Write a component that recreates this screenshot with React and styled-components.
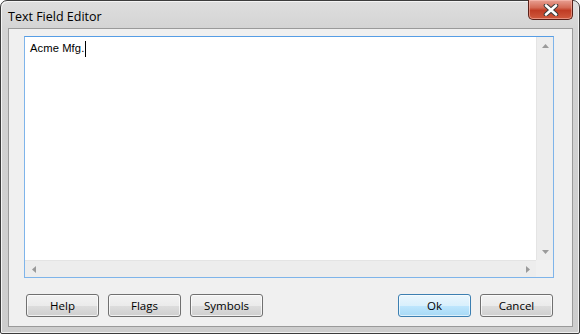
import React from 'react';
import styled, { createGlobalStyle } from 'styled-components';

const Global = createGlobalStyle`
  html, body { margin: 0; padding: 0; background: #ffffff; }
  body { width: 580px; height: 334px; overflow: hidden; }
`;

const Window = styled.div`
  box-sizing: border-box;
  width: 580px;
  height: 334px;
  border: 1px solid #3c3c3c;
  border-radius: 7px 7px 2px 2px;
  background: linear-gradient(to bottom, #dedede 0px, #d3d3d3 30px, #cdcdcd 100%);
  box-shadow: inset 1px 1px 0 #f4f4f4, inset -1px -1px 0 #f0f0f0;
  display: flex;
  flex-direction: column;
  font-family: "Liberation Sans", Arial, sans-serif;
`;

const TitleBar = styled.div`
  height: 28px;
  display: flex;
  align-items: flex-start;
  justify-content: space-between;
  padding: 0 6px 0 7px;
`;

const Title = styled.span`
  margin-top: 7px;
  font-family: "Open Sans", "Liberation Sans", sans-serif;
  font-size: 12.5px;
  color: #000;
`;

const CloseButton = styled.div`
  box-sizing: border-box;
  width: 45px;
  height: 20px;
  margin-top: -1px;
  border: 1px solid #5a2018;
  border-top: none;
  border-radius: 0 0 5px 5px;
  background: linear-gradient(to bottom, #e8a093 0%, #d46a55 40%, #c03c24 55%, #d05a3e 100%);
  box-shadow: inset 0 0 0 1px rgba(255, 200, 190, 0.5);
  display: flex;
  align-items: center;
  justify-content: center;
`;

const Client = styled.div`
  flex: 1;
  margin: 0 6px 6px 7px;
  border: 1px solid #9a9a9a;
  background: #f0f0f0;
  padding: 7px 18px 9px 15px;
  display: flex;
  flex-direction: column;
`;

const Editor = styled.div`
  box-sizing: border-box;
  height: 242px;
  width: 530px;
  border: 1px solid #7eb4ea;
  border-top-color: #569de5;
  background: #fff;
  display: grid;
  grid-template-columns: 1fr 17px;
  grid-template-rows: 1fr 17px;
`;

const TextArea = styled.div`
  padding: 4px 5px;
  font-family: "Liberation Sans", Arial, sans-serif;
  font-size: 11.2px;
  letter-spacing: 0.1px;
  color: #000;
  line-height: 15px;
`;

const Caret = styled.span`
  display: inline-block;
  width: 1px;
  height: 16px;
  background: #000;
  vertical-align: top;
  margin-left: 1px;
`;

const ScrollBar = styled.div`
  background: #ededed;
  display: flex;
  flex-direction: ${p => (p.$vertical ? 'column' : 'row')};
  justify-content: space-between;
  align-items: center;
  border-left: ${p => (p.$vertical ? '1px solid #e4e4e4' : 'none')};
  border-top: ${p => (p.$vertical ? 'none' : '1px solid #e4e4e4')};
`;

const Arrow = styled.div`
  width: 17px;
  height: 17px;
  display: flex;
  align-items: center;
  justify-content: center;
`;

const Corner = styled.div`
  background: #f0f0f0;
`;

const ButtonRow = styled.div`
  margin-top: 16px;
  padding: 0 1px 0 2px;
  display: flex;
  gap: 9px;
`;

const Spacer = styled.div`
  flex: 1;
`;

const Button = styled.button`
  box-sizing: border-box;
  width: 73px;
  height: 23px;
  margin: 0;
  border: 1px solid ${p => (p.$default ? '#3c7fb1' : '#707070')};
  border-radius: 3px;
  background: ${p =>
    p.$default
      ? 'linear-gradient(to bottom, #eaf6fd 0%, #d9f0fc 50%, #bee6fd 51%, #a7d9f5 100%)'
      : 'linear-gradient(to bottom, #f2f2f2 0%, #ebebeb 50%, #dddddd 51%, #cfcfcf 100%)'};
  box-shadow: inset 0 0 0 1px ${p => (p.$default ? 'rgba(255,255,255,0.6)' : 'rgba(255,255,255,0.7)')};
  font-family: "Open Sans", "Liberation Sans", sans-serif;
  font-size: 11.5px;
  color: #000;
  padding: 0;
`;

const UpArrow = () => (
  <svg width="7" height="4" viewBox="0 0 7 4"><path d="M0 4 L3.5 0 L7 4 Z" fill="#9a9a9a" /></svg>
);
const DownArrow = () => (
  <svg width="7" height="4" viewBox="0 0 7 4"><path d="M0 0 L3.5 4 L7 0 Z" fill="#9a9a9a" /></svg>
);
const LeftArrow = () => (
  <svg width="4" height="7" viewBox="0 0 4 7"><path d="M4 0 L0 3.5 L4 7 Z" fill="#9a9a9a" /></svg>
);
const RightArrow = () => (
  <svg width="4" height="7" viewBox="0 0 4 7"><path d="M0 0 L4 3.5 L0 7 Z" fill="#9a9a9a" /></svg>
);

const CloseGlyph = () => (
  <svg width="16" height="12" viewBox="0 0 16 12">
    <path d="M3 1.5 L13 10.5 M13 1.5 L3 10.5" stroke="#3a3a3a" strokeWidth="4.6" strokeLinecap="round" />
    <path d="M3 1.5 L13 10.5 M13 1.5 L3 10.5" stroke="#ffffff" strokeWidth="2.6" strokeLinecap="round" />
  </svg>
);

export default function App() {
  return (
    <>
      <Global />
      <Window>
        <TitleBar>
          <Title>Text Field Editor</Title>
          <CloseButton>
            <CloseGlyph />
          </CloseButton>
        </TitleBar>
        <Client>
          <Editor>
            <TextArea>
              Acme Mfg.<Caret />
            </TextArea>
            <ScrollBar $vertical>
              <Arrow><UpArrow /></Arrow>
              <Arrow><DownArrow /></Arrow>
            </ScrollBar>
            <ScrollBar>
              <Arrow><LeftArrow /></Arrow>
              <Arrow><RightArrow /></Arrow>
            </ScrollBar>
            <Corner />
          </Editor>
          <ButtonRow>
            <Button>Help</Button>
            <Button>Flags</Button>
            <Button>Symbols</Button>
            <Spacer />
            <Button $default>Ok</Button>
            <Button>Cancel</Button>
          </ButtonRow>
        </Client>
      </Window>
    </>
  );
}
